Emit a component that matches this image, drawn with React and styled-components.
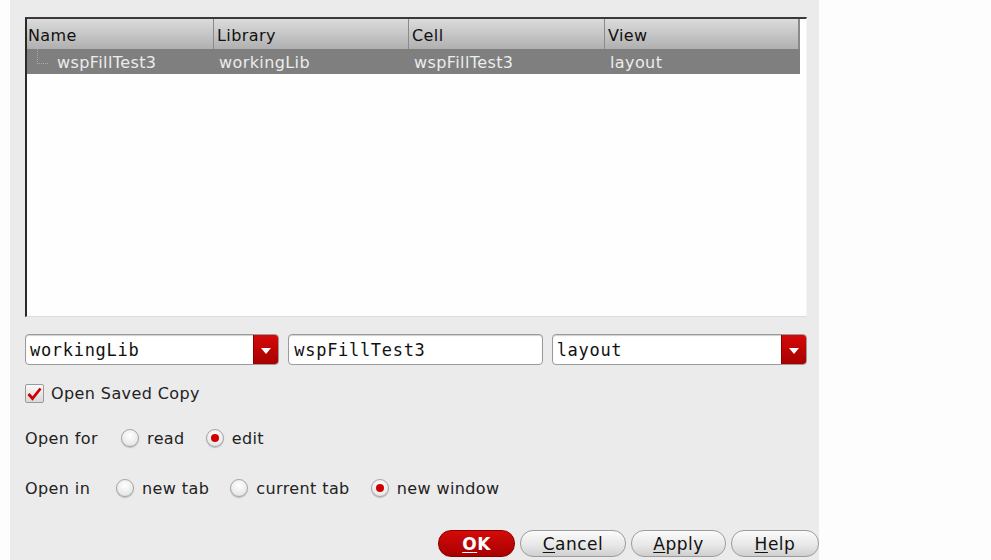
import styled, { createGlobalStyle } from "styled-components";

const GlobalStyle = createGlobalStyle`
  html, body { margin: 0; padding: 0; background: #fdfdfd; }
  body { font-family: "DejaVu Sans", "Liberation Sans", sans-serif; }
`;

const Page = styled.div`
  display: flex;
  width: 991px;
  height: 560px;
  padding-left: 10px;
  box-sizing: border-box;
  overflow: hidden;
`;

const Panel = styled.div`
  width: 809px;
  height: 560px;
  background: #ebebeb;
  display: flex;
  flex-direction: column;
  padding: 17px 0 0 15px;
  box-sizing: border-box;
  color: #222;
  letter-spacing: 0.4px;
`;

const Table = styled.div`
  width: 782px;
  height: 300px;
  background: #fefefe;
  border-top: 2px solid #3a3a3a;
  border-left: 2px solid #2a2a2a;
  border-right: 1px solid #f4f4f4;
  border-bottom: 1px solid #dcdcdc;
  box-sizing: border-box;
  padding-right: 7px;
`;

const Grid = styled.div`
  display: grid;
  grid-template-columns: 186px 195px 196px 196px;
`;

const HeadCell = styled.div`
  height: 30px;
  display: flex;
  align-items: center;
  padding: 2px 0 0 ${(p) => (p.$first ? "1px" : "3px")};
  font-size: 16px;
  color: #111;
  background: linear-gradient(#dcdcdc, #b0b0b0);
  border-left: ${(p) => (p.$first ? "none" : "1px solid #8a8a8a")};
  border-right: ${(p) => (p.$last ? "2px solid #8a8a8a" : "none")};
  box-sizing: border-box;
`;

const RowCell = styled.div`
  height: 25px;
  display: flex;
  align-items: center;
  padding-top: 2px;
  box-sizing: border-box;
  background: #7f7f7f;
  color: #ececec;
  font-size: 16px;
  padding-left: ${(p) => p.$indent || "6px"};
  position: relative;
`;

const TreeLine = styled.span`
  position: absolute;
  left: 10px;
  top: 0;
  width: 10px;
  height: 14px;
  border-left: 1px dotted #aaa;
  border-bottom: 1px dotted #aaa;
`;

const FieldRow = styled.div`
  display: flex;
  gap: 9px;
  margin-top: 17px;
  width: 782px;
  letter-spacing: 0;
`;

const Combo = styled.div`
  display: flex;
  width: ${(p) => p.$w}px;
  height: 31px;
  border: 1px solid #9a9a9a;
  border-radius: 4px;
  background: #fff;
  box-sizing: border-box;
  overflow: hidden;
  box-shadow: inset 0 1px 1px #d0d0d0;
`;

const ComboText = styled.div`
  flex: 1;
  display: flex;
  align-items: center;
  padding-left: ${(p) => p.$pad || "4px"};
  font-family: "DejaVu Sans Mono", "Liberation Mono", monospace;
  font-size: 17px;
  letter-spacing: 0.7px;
  color: #111;
`;

const DropButton = styled.div`
  width: 24px;
  background: linear-gradient(#d40a0a, #a80000);
  display: flex;
  align-items: center;
  justify-content: center;
  border-left: 1px solid #8a0000;
`;

const Arrow = styled.span`
  width: 0;
  height: 0;
  border-left: 5px solid transparent;
  border-right: 5px solid transparent;
  border-top: 6px solid #fff;
  margin-top: 2px;
`;

const CheckRow = styled.label`
  display: flex;
  align-items: center;
  gap: 7px;
  margin-top: 19px;
  font-size: 16px;
  height: 19px;
`;

const CheckBox = styled.span`
  width: 19px;
  height: 19px;
  box-sizing: border-box;
  border: 1px solid #9a9a9a;
  border-radius: 2px;
  background: linear-gradient(#fafafa, #d8d8d8);
  display: flex;
  align-items: center;
  justify-content: center;
`;

const OptionRow = styled.div`
  display: flex;
  align-items: center;
  margin-top: ${(p) => p.$mt}px;
  height: 22px;
  font-size: 16px;
`;

const OptionLabel = styled.span`
  width: ${(p) => p.$w}px;
`;

const Option = styled.span`
  display: flex;
  align-items: center;
  gap: 8px;
  margin-right: ${(p) => p.$gap}px;
`;

const Radio = styled.span`
  width: 18px;
  height: 18px;
  border-radius: 50%;
  box-sizing: border-box;
  border: 1px solid #a5a5a5;
  background: radial-gradient(circle at 50% 35%, #ffffff, #dedede);
  box-shadow: 0 1px 1px #bbb;
  display: flex;
  align-items: center;
  justify-content: center;
  &::after {
    content: "";
    width: 8px;
    height: 8px;
    border-radius: 50%;
    background: ${(p) => (p.$on ? "#d00000" : "transparent")};
  }
`;

const ButtonBar = styled.div`
  display: flex;
  justify-content: flex-end;
  gap: 5px;
  margin-top: auto;
  margin-bottom: 3px;
`;

const Button = styled.button`
  width: ${(p) => p.$w}px;
  height: 27px;
  border-radius: 13px;
  font-family: "DejaVu Sans", "Liberation Sans", sans-serif;
  font-size: 17px;
  letter-spacing: 0.5px;
  padding: 0;
  cursor: pointer;
  border: 1px solid ${(p) => (p.$primary ? "#8a0000" : "#9c9c9c")};
  background: ${(p) =>
    p.$primary
      ? "linear-gradient(#d40a0a, #a80000)"
      : "linear-gradient(#fbfbfb, #e6e6e6 60%, #cfcfcf)"};
  color: ${(p) => (p.$primary ? "#fff" : "#111")};
  font-weight: ${(p) => (p.$primary ? "bold" : "normal")};
  u { text-underline-offset: 2px; }
`;

const columns = ["Name", "Library", "Cell", "View"];

export default function App() {
  return (
    <>
      <GlobalStyle />
      <Page>
        <Panel>
          <Table>
            <Grid>
              {columns.map((c, i) => (
                <HeadCell key={c} $first={i === 0} $last={i === 3}>
                  {c}
                </HeadCell>
              ))}
              <RowCell $indent="30px">
                <TreeLine />
                wspFillTest3
              </RowCell>
              <RowCell>workingLib</RowCell>
              <RowCell>wspFillTest3</RowCell>
              <RowCell>layout</RowCell>
            </Grid>
          </Table>

          <FieldRow>
            <Combo $w={255}>
              <ComboText>workingLib</ComboText>
              <DropButton>
                <Arrow />
              </DropButton>
            </Combo>
            <Combo $w={255}>
              <ComboText $pad="5px">wspFillTest3</ComboText>
            </Combo>
            <Combo $w={256}>
              <ComboText>layout</ComboText>
              <DropButton>
                <Arrow />
              </DropButton>
            </Combo>
          </FieldRow>

          <CheckRow>
            <CheckBox>
              <svg width="15" height="14" viewBox="0 0 15 14">
                <path d="M1.5 7 L5.5 11.5 L13.5 1.5" fill="none" stroke="#d00000" strokeWidth="2.8" />
              </svg>
            </CheckBox>
            Open Saved Copy
          </CheckRow>

          <OptionRow $mt={24}>
            <OptionLabel $w={96}>Open for</OptionLabel>
            <Option $gap={21}>
              <Radio />
              read
            </Option>
            <Option $gap={0}>
              <Radio $on />
              edit
            </Option>
          </OptionRow>

          <OptionRow $mt={28}>
            <OptionLabel $w={91}>Open in</OptionLabel>
            <Option $gap={21}>
              <Radio />
              new tab
            </Option>
            <Option $gap={21}>
              <Radio />
              current tab
            </Option>
            <Option $gap={0}>
              <Radio $on />
              new window
            </Option>
          </OptionRow>

          <ButtonBar>
            <Button $primary $w={77}>
              <u>O</u>K
            </Button>
            <Button $w={106}>
              <u>C</u>ancel
            </Button>
            <Button $w={95}>
              <u>A</u>pply
            </Button>
            <Button $w={88}>
              <u>H</u>elp
            </Button>
          </ButtonBar>
        </Panel>
      </Page>
    </>
  );
}
